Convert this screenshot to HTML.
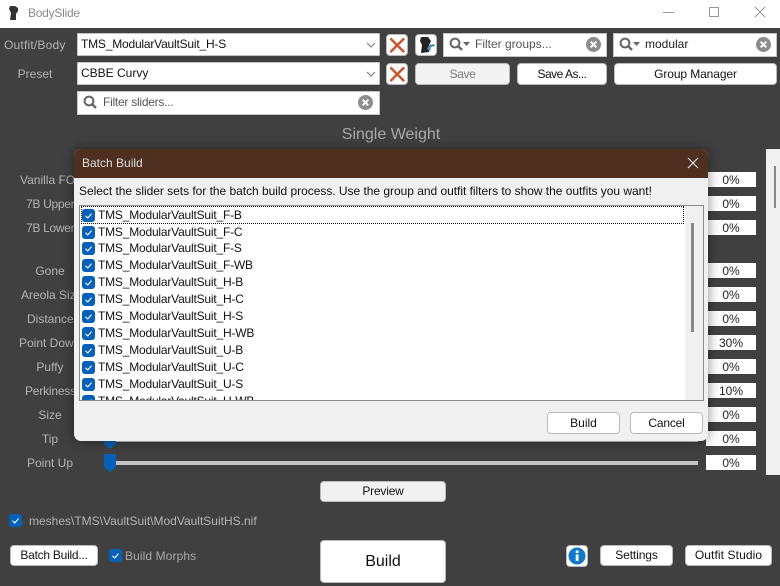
<!DOCTYPE html>
<html><head><meta charset="utf-8"><style>
html,body{margin:0;padding:0}
body{width:780px;height:586px;overflow:hidden;position:relative;background:#404040;font:12px "Liberation Sans",sans-serif;letter-spacing:0;color:#000}
div,span{position:absolute;box-sizing:border-box;white-space:nowrap}
.l{color:#b4b4b4;height:16px;line-height:16px;text-align:center;left:0;width:100px;overflow:hidden}
.p{left:706px;width:50px;height:15px;background:#fff;text-align:center;line-height:16px;color:#222}
.b{background:#fff;border:1px solid #bbb;border-radius:4px;text-align:center;color:#111;height:22px;line-height:20px}
.i{background:#fff;border:1px solid #c4c4c4;height:23px;line-height:21px}
.c{width:13px;height:13px;background:#0560b8;border-radius:3px}
.c svg{position:absolute;left:2px;top:2px}
.r{left:18px;height:17px;line-height:17px;color:#111;letter-spacing:-.2px}
.x{width:22px;height:22px;background:#fff;border:1px solid #bbb;border-radius:4px}
</style></head><body>
<svg width="0" height="0" style="position:absolute"><defs>
<path id="ck" d="M1.5 4.8 L3.8 7 L7.5 2.6" fill="none" stroke="#fff" stroke-width="1.1"/>
<g id="mg"><circle cx="6" cy="6" r="4.4" fill="none" stroke="#666" stroke-width="2"/><path d="M9 9 L13 13" stroke="#666" stroke-width="2.4"/></g>
<g id="cl"><circle cx="7.5" cy="7.5" r="7.5" fill="#8d8d8d"/><path d="M4.7 4.7 L10.3 10.3 M10.3 4.7 L4.7 10.3" stroke="#fff" stroke-width="2"/></g>
<path id="xx" d="M3.5 3.5 L18 18 M18 3.5 L3.5 18" stroke="#c9572a" stroke-width="2.6"/>
</defs></svg>

<!-- title bar -->
<div style="left:0;top:0;width:780px;height:28px;background:#fff"></div>
<svg style="position:absolute;left:8px;top:4px" width="12" height="18"><path d="M2 2 L7 2 L10 4 L10 7 L8 10 L8 16 L2 16 L3 9 L1 5Z" fill="#333"/></svg>
<div style="left:28px;top:5px;height:16px;line-height:16px;color:#8a8a8a;letter-spacing:-.25px">BodySlide</div>
<div style="left:663px;top:12px;width:11px;height:1px;background:#999"></div>
<div style="left:709px;top:7px;width:10px;height:10px;border:1px solid #999"></div>
<svg style="position:absolute;left:754px;top:6px" width="12" height="12"><path d="M1 1 L11 11 M11 1 L1 11" stroke="#999" stroke-width="1"/></svg>

<!-- top controls -->
<div class="l" style="left:4px;width:64px;top:37px;text-align:left;letter-spacing:.2px">Outfit/Body</div>
<div class="l" style="left:4px;width:62px;top:66px">Preset</div>
<div class="i" style="left:77px;top:33px;width:303px;height:23px;padding-left:3px;border-radius:1px;color:#111;letter-spacing:-.2px">TMS_ModularVaultSuit_H-S</div>
<svg style="position:absolute;left:366px;top:42px" width="10" height="6"><path d="M1 1 L5 5 L9 1" fill="none" stroke="#777"/></svg>
<div class="i" style="left:77px;top:62px;width:303px;height:23px;padding-left:3px;border-radius:1px;color:#111">CBBE Curvy</div>
<svg style="position:absolute;left:366px;top:71px" width="10" height="6"><path d="M1 1 L5 5 L9 1" fill="none" stroke="#777"/></svg>
<div class="i" style="left:77px;top:91px;width:303px;height:24px;padding-left:25px;color:#555;letter-spacing:-.25px">Filter sliders...</div>
<svg style="position:absolute;left:83px;top:95px" width="14" height="14"><use href="#mg"/></svg>
<svg style="position:absolute;left:358px;top:95px" width="15" height="15"><use href="#cl"/></svg>

<div class="x" style="left:386px;top:34px"><svg width="20" height="20" viewBox="0 0 21 21" style="position:absolute;left:0;top:0"><use href="#xx"/></svg></div>
<div class="x" style="left:386px;top:63px"><svg width="20" height="20" viewBox="0 0 21 21" style="position:absolute;left:0;top:0"><use href="#xx"/></svg></div>
<div class="x" style="left:415px;top:34px"><svg width="20" height="20" style="position:absolute;left:0;top:0"><path d="M5 2 L12 2 L15 6 L13 10 L13 17 L5 18 L6 10 L4 6Z" fill="#222"/><path d="M11 14 L13 10 L18 9 L19 11 L15 12 L14 16Z" fill="#4b8cb5"/></svg></div>

<div class="i" style="left:443px;top:33px;width:164px;height:24px;padding-left:31px;color:#555">Filter groups...</div>
<svg style="position:absolute;left:449px;top:37px" width="14" height="14"><use href="#mg"/></svg>
<svg style="position:absolute;left:463px;top:42px" width="7" height="4"><path d="M0 0 H7 L3.5 4Z" fill="#666"/></svg>
<svg style="position:absolute;left:586px;top:37px" width="15" height="15"><use href="#cl"/></svg>
<div class="i" style="left:613px;top:33px;width:164px;height:24px;padding-left:31px;color:#222">modular</div>
<svg style="position:absolute;left:619px;top:37px" width="14" height="14"><use href="#mg"/></svg>
<svg style="position:absolute;left:633px;top:42px" width="7" height="4"><path d="M0 0 H7 L3.5 4Z" fill="#666"/></svg>
<svg style="position:absolute;left:756px;top:37px" width="15" height="15"><use href="#cl"/></svg>

<div class="b" style="left:415px;top:63px;width:95px;background:#f3f3f3;color:#777;letter-spacing:-.4px">Save</div>
<div class="b" style="left:517px;top:63px;width:90px;letter-spacing:-.5px">Save As...</div>
<div class="b" style="left:614px;top:63px;width:163px;letter-spacing:-.1px">Group Manager</div>

<div style="left:0;width:782px;text-align:center;top:125px;height:20px;line-height:20px;font-size:16px;color:#a8a8a8">Single Weight</div>

<!-- slider labels -->
<div class="l" style="top:172px;left:0;width:74px;padding-left:20px;text-align:left">Vanilla FO4</div>
<div class="l" style="top:196px;left:0;width:74px;padding-left:26px;text-align:left;letter-spacing:-.3px">7B Upper</div>
<div class="l" style="top:220px;left:0;width:74px;padding-left:26px;text-align:left;letter-spacing:-.3px">7B Lower</div>
<div class="l" style="top:263px">Gone</div>
<div class="l" style="top:287px;left:0;width:74px;padding-left:21px;text-align:left">Areola Size</div>
<div class="l" style="top:311px;left:0;width:74px;padding-left:27px;text-align:left">Distance</div>
<div class="l" style="top:335px;left:0;width:74px;padding-left:19px;text-align:left">Point Down</div>
<div class="l" style="top:359px">Puffy</div>
<div class="l" style="top:383px;left:0;width:74px;padding-left:25px;text-align:left;letter-spacing:-.2px">Perkiness</div>
<div class="l" style="top:407px">Size</div>
<div class="l" style="top:431px">Tip</div>
<div class="l" style="top:455px">Point Up</div>

<!-- values -->
<div class="p" style="top:172px">0%</div>
<div class="p" style="top:196px">0%</div>
<div class="p" style="top:220px">0%</div>
<div class="p" style="top:263px">0%</div>
<div class="p" style="top:287px">0%</div>
<div class="p" style="top:311px">0%</div>
<div class="p" style="top:335px">30%</div>
<div class="p" style="top:359px">0%</div>
<div class="p" style="top:383px">10%</div>
<div class="p" style="top:407px">0%</div>
<div class="p" style="top:431px">0%</div>
<div class="p" style="top:455px">0%</div>

<!-- side panel -->
<div style="left:766px;top:149px;width:14px;height:326px;background:#f0f0f0"></div>
<div style="left:774px;top:166px;width:2px;height:42px;background:#888"></div>

<!-- sliders -->
<div style="left:116px;top:439px;width:582px;height:3px;background:#c4c4c4"></div>
<svg style="position:absolute;left:104px;top:430px" width="12" height="20"><path d="M0 0 H12 V14 L6 19 L0 14Z" fill="#0560b8"/></svg>
<div style="left:116px;top:461px;width:582px;height:4px;background:#c4c4c4"></div>
<svg style="position:absolute;left:104px;top:454px" width="12" height="19"><path d="M0 0 H12 V13 L6 18 L0 13Z" fill="#0560b8"/></svg>

<!-- dialog -->
<div style="left:74px;top:149px;width:634px;height:292px;background:#f0f0f0;border-radius:7px;overflow:hidden;box-shadow:0 0 12px rgba(0,0,0,.45)">
 <div style="left:0;top:0;width:634px;height:29px;background:#4f3020"></div>
 <div style="left:8px;top:6px;height:16px;line-height:16px;color:#ddd">Batch Build</div>
 <svg style="position:absolute;left:613px;top:8px" width="12" height="12"><path d="M1 1 L11 11 M11 1 L1 11" stroke="#e8e8e8" stroke-width="1.1"/></svg>
 <div style="left:5px;top:34px;height:16px;line-height:16px;color:#111;letter-spacing:-.03px">Select the slider sets for the batch build process. Use the group and outfit filters to show the outfits you want!</div>
 <div style="left:5px;top:56px;width:625px;height:196px;background:#fff;border:1px solid #8c8c8c;overflow:hidden">
  <div style="left:605px;top:0;width:18px;height:194px;background:#f0f0f0"></div>
  <div style="left:611px;top:17px;width:3px;height:109px;background:#888"></div>
  <div style="left:1px;top:0;width:603px;height:18px;border:1px dotted #111"></div>
  <div class="c" style="left:2px;top:3px"><svg width="9" height="9"><use href="#ck"/></svg></div><div class="r" style="top:1px">TMS_ModularVaultSuit_F-B</div>
  <div class="c" style="left:2px;top:20px"><svg width="9" height="9"><use href="#ck"/></svg></div><div class="r" style="top:18px">TMS_ModularVaultSuit_F-C</div>
  <div class="c" style="left:2px;top:36px"><svg width="9" height="9"><use href="#ck"/></svg></div><div class="r" style="top:34px">TMS_ModularVaultSuit_F-S</div>
  <div class="c" style="left:2px;top:53px"><svg width="9" height="9"><use href="#ck"/></svg></div><div class="r" style="top:51px">TMS_ModularVaultSuit_F-WB</div>
  <div class="c" style="left:2px;top:70px"><svg width="9" height="9"><use href="#ck"/></svg></div><div class="r" style="top:68px">TMS_ModularVaultSuit_H-B</div>
  <div class="c" style="left:2px;top:87px"><svg width="9" height="9"><use href="#ck"/></svg></div><div class="r" style="top:85px">TMS_ModularVaultSuit_H-C</div>
  <div class="c" style="left:2px;top:104px"><svg width="9" height="9"><use href="#ck"/></svg></div><div class="r" style="top:102px">TMS_ModularVaultSuit_H-S</div>
  <div class="c" style="left:2px;top:121px"><svg width="9" height="9"><use href="#ck"/></svg></div><div class="r" style="top:119px">TMS_ModularVaultSuit_H-WB</div>
  <div class="c" style="left:2px;top:138px"><svg width="9" height="9"><use href="#ck"/></svg></div><div class="r" style="top:136px">TMS_ModularVaultSuit_U-B</div>
  <div class="c" style="left:2px;top:155px"><svg width="9" height="9"><use href="#ck"/></svg></div><div class="r" style="top:153px">TMS_ModularVaultSuit_U-C</div>
  <div class="c" style="left:2px;top:172px"><svg width="9" height="9"><use href="#ck"/></svg></div><div class="r" style="top:170px">TMS_ModularVaultSuit_U-S</div>
  <div class="c" style="left:2px;top:189px"><svg width="9" height="9"><use href="#ck"/></svg></div><div class="r" style="top:187px">TMS_ModularVaultSuit_U-WB</div>
 </div>
 <div class="b" style="left:473px;top:263px;width:73px">Build</div>
 <div class="b" style="left:556px;top:263px;width:73px;letter-spacing:-.2px">Cancel</div>
</div>

<!-- bottom -->
<div class="b" style="left:320px;top:481px;width:126px;height:21px;line-height:19px;background:#f1f1f1;letter-spacing:-.2px">Preview</div>
<div class="c" style="left:9px;top:514px"><svg width="9" height="9"><use href="#ck"/></svg></div>
<div class="l" style="left:29px;top:513px;width:240px;text-align:left">meshes\TMS\VaultSuit\ModVaultSuitHS.nif</div>
<div class="b" style="left:10px;top:545px;width:88px;height:21px;line-height:19px;letter-spacing:-.25px">Batch Build...</div>
<div class="c" style="left:109px;top:549px"><svg width="9" height="9"><use href="#ck"/></svg></div>
<div class="l" style="left:125px;top:548px;width:80px;text-align:left;color:#a8a8a8;letter-spacing:.1px">Build Morphs</div>
<div class="b" style="left:320px;top:540px;width:126px;height:43px;line-height:41px;font-size:16px">Build</div>
<div class="x" style="left:566px;top:545px"><svg width="20" height="20" style="position:absolute;left:0;top:0"><circle cx="10" cy="10" r="8.5" fill="#1278c9"/><rect x="8.7" y="8.5" width="2.8" height="6.5" fill="#fff"/><rect x="8.7" y="4.5" width="2.8" height="2.6" fill="#fff"/></svg></div>
<div class="b" style="left:600px;top:545px;width:73px;height:21px;line-height:19px;letter-spacing:-.1px">Settings</div>
<div class="b" style="left:685px;top:545px;width:87px;height:21px;line-height:19px;letter-spacing:.1px">Outfit Studio</div>
</body></html>
